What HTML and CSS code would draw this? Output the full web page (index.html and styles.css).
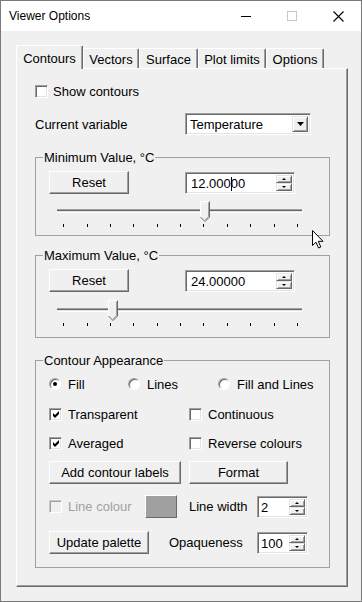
FILE: index.html
```html
<!DOCTYPE html>
<html lang="en">
<head>
    <meta charset="UTF-8">
    <meta name="viewport" content="width=device-width, initial-scale=1.0">
    <title>Viewer Options</title>
    <link rel="stylesheet" href="styles.css">
</head>
<body>
    <div class="window">
        <div class="titlebar">
            <span class="title">Viewer Options</span>
            <div class="caption">
                <span class="cap">
                    <svg width="10" height="10" viewBox="0 0 10 10"><rect x="0" y="5" width="10" height="1" fill="#000"/></svg>
                </span>
                <span class="cap">
                    <svg width="10" height="10" viewBox="0 0 10 10"><rect x="0.5" y="0.5" width="9" height="9" fill="none" stroke="#c8c8c8"/></svg>
                </span>
                <span class="cap">
                    <svg width="11" height="11" viewBox="0 0 11 11"><path d="M0.5 0.5 L10.5 10.5 M10.5 0.5 L0.5 10.5" stroke="#000" stroke-width="1.1"/></svg>
                </span>
            </div>
        </div>

        <div class="client">
            <div class="tabs">
                <div class="tab active w-contours">Contours</div>
                <div class="tab w-vectors">Vectors</div>
                <div class="tab w-surface">Surface</div>
                <div class="tab w-limits">Plot limits</div>
                <div class="tab w-options">Options</div>
            </div>

            <div class="panel">
                <div class="show-row">
                    <span class="check"></span>
                    <span>Show contours</span>
                </div>

                <div class="var-row">
                    <span class="var-label">Current variable</span>
                    <div class="combo">
                        <span class="combo-text">Temperature</span>
                        <span class="combo-btn">
                            <svg width="7" height="4" viewBox="0 0 7 4"><polygon points="0,0 7,0 3.5,4" fill="#000"/></svg>
                        </span>
                    </div>
                </div>

                <!-- minimum value -->
                <fieldset class="group g-min">
                    <legend>Minimum Value, °C</legend>
                    <div class="value-row">
                        <button class="btn reset">Reset</button>
                        <div class="edit spin-edit">
                            <span class="edit-text">12.000<span class="caret"></span>00</span>
                            <span class="spin">
                                <span class="spin-btn"><i class="up"></i></span>
                                <span class="spin-btn"><i class="down"></i></span>
                            </span>
                        </div>
                    </div>
                    <svg class="slider" width="293" height="30" viewBox="0 0 293 30">
                        <rect x="21" y="10" width="245" height="1" fill="#a0a0a0"/>
                        <rect x="21" y="11" width="245" height="1" fill="#696969"/>
                        <rect x="21" y="12" width="245" height="1" fill="#e3e3e3"/>
                        <rect x="21" y="13" width="245" height="1" fill="#fff"/>
                        <polygon points="164.5,2.5 173.5,2.5 173.5,18 169,22.5 164.5,18" fill="#f0f0f0"/>
                        <polyline points="164.5,18 164.5,2.5 173,2.5" fill="none" stroke="#fff"/>
                        <polyline points="173.5,2.5 173.5,18 169,22.5 164.5,18" fill="none" stroke="#696969"/>
                        <polyline points="172.5,3.5 172.5,17.6 169,21" fill="none" stroke="#a0a0a0"/>
                        <g fill="#000">
                            <rect x="27" y="25" width="1" height="3"/>
                            <rect x="51" y="25" width="1" height="3"/>
                            <rect x="74" y="25" width="1" height="3"/>
                            <rect x="97" y="25" width="1" height="3"/>
                            <rect x="121" y="25" width="1" height="3"/>
                            <rect x="144" y="25" width="1" height="3"/>
                            <rect x="167" y="25" width="1" height="3"/>
                            <rect x="191" y="25" width="1" height="3"/>
                            <rect x="214" y="25" width="1" height="3"/>
                            <rect x="238" y="25" width="1" height="3"/>
                            <rect x="261" y="25" width="1" height="3"/>
                        </g>
                    </svg>
                </fieldset>

                <!-- maximum value -->
                <fieldset class="group g-max">
                    <legend>Maximum Value, °C</legend>
                    <div class="value-row">
                        <button class="btn reset">Reset</button>
                        <div class="edit spin-edit">
                            <span class="edit-text">24.00000</span>
                            <span class="spin">
                                <span class="spin-btn"><i class="up"></i></span>
                                <span class="spin-btn"><i class="down"></i></span>
                            </span>
                        </div>
                    </div>
                    <svg class="slider" width="293" height="30" viewBox="0 0 293 30">
                        <rect x="21" y="10" width="245" height="1" fill="#a0a0a0"/>
                        <rect x="21" y="11" width="245" height="1" fill="#696969"/>
                        <rect x="21" y="12" width="245" height="1" fill="#e3e3e3"/>
                        <rect x="21" y="13" width="245" height="1" fill="#fff"/>
                        <polygon points="72.5,2.5 81.5,2.5 81.5,18 77,22.5 72.5,18" fill="#f0f0f0"/>
                        <polyline points="72.5,18 72.5,2.5 81,2.5" fill="none" stroke="#fff"/>
                        <polyline points="81.5,2.5 81.5,18 77,22.5 72.5,18" fill="none" stroke="#696969"/>
                        <polyline points="80.5,3.5 80.5,17.6 77,21" fill="none" stroke="#a0a0a0"/>
                        <g fill="#000">
                            <rect x="27" y="25" width="1" height="3"/>
                            <rect x="51" y="25" width="1" height="3"/>
                            <rect x="74" y="25" width="1" height="3"/>
                            <rect x="97" y="25" width="1" height="3"/>
                            <rect x="121" y="25" width="1" height="3"/>
                            <rect x="144" y="25" width="1" height="3"/>
                            <rect x="167" y="25" width="1" height="3"/>
                            <rect x="191" y="25" width="1" height="3"/>
                            <rect x="214" y="25" width="1" height="3"/>
                            <rect x="238" y="25" width="1" height="3"/>
                            <rect x="261" y="25" width="1" height="3"/>
                        </g>
                    </svg>
                </fieldset>

                <!-- contour appearance -->
                <fieldset class="group g-look">
                    <legend>Contour Appearance</legend>
                    <div class="radio-row">
                        <span class="opt opt-fill"><span class="radio on"></span>Fill</span>
                        <span class="opt opt-lines"><span class="radio"></span>Lines</span>
                        <span class="opt"><span class="radio"></span>Fill and Lines</span>
                    </div>
                    <div class="check-row first">
                        <span class="opt opt-col">
                            <span class="check"><svg class="tick" width="7" height="7" viewBox="0 0 7 7"><polygon points="0,2 2,4 6,0 6,3 2,7 0,5" fill="#000"/></svg></span>Transparent
                        </span>
                        <span class="opt"><span class="check"></span>Continuous</span>
                    </div>
                    <div class="check-row">
                        <span class="opt opt-col">
                            <span class="check"><svg class="tick" width="7" height="7" viewBox="0 0 7 7"><polygon points="0,2 2,4 6,0 6,3 2,7 0,5" fill="#000"/></svg></span>Averaged
                        </span>
                        <span class="opt"><span class="check"></span>Reverse colours</span>
                    </div>
                    <div class="btn-row">
                        <button class="btn labels-btn">Add contour labels</button>
                        <button class="btn format-btn">Format</button>
                    </div>
                    <div class="line-row">
                        <span class="opt disabled line-col"><span class="check off"></span>Line colour</span>
                        <span class="btn swatch"></span>
                        <span class="line-label">Line width</span>
                        <div class="edit small-edit">
                            <span class="edit-text">2</span>
                            <span class="spin">
                                <span class="spin-btn"><i class="up"></i></span>
                                <span class="spin-btn"><i class="down"></i></span>
                            </span>
                        </div>
                    </div>
                    <div class="palette-row">
                        <button class="btn palette-btn">Update palette</button>
                        <span class="opq-label">Opaqueness</span>
                        <div class="edit small-edit">
                            <span class="edit-text">100</span>
                            <span class="spin">
                                <span class="spin-btn"><i class="up"></i></span>
                                <span class="spin-btn"><i class="down"></i></span>
                            </span>
                        </div>
                    </div>
                </fieldset>
            </div>
        </div>

        <svg class="cursor" width="13" height="19" viewBox="0 0 13 19">
            <path d="M0.5 0.5 L0.5 15.5 L4 12.2 L6.6 18 L8.8 17 L6.3 11.3 L11 11.3 Z" fill="#fff" stroke="#000" stroke-linejoin="miter"/>
        </svg>
    </div>
</body>
</html>
```

FILE: styles.css
```css
html, body {
    margin: 0;
    padding: 0;
}
body {
    font-family: "Liberation Sans", Arial, sans-serif;
    font-size: 13px;
    color: #000;
    background-color: #f0f0f0;
}
.window {
    position: relative;
    width: 362px;
    height: 602px;
    box-sizing: border-box;
    border: 1px solid #7a7a7a;
    background-color: #f0f0f0;
    display: flex;
    flex-direction: column;
    overflow: hidden;
}
.titlebar {
    height: 30px;
    flex: none;
    background-color: #fff;
    display: flex;
    align-items: center;
}
.title {
    flex: 1;
    font-size: 12px;
    padding-left: 8px;
    padding-bottom: 1px;
}
.caption {
    display: flex;
    height: 30px;
}
.cap {
    width: 46px;
    display: flex;
    align-items: center;
    justify-content: center;
}
.client {
    padding: 14px 0 0 14px;
}

/* Tabs */
.tabs {
    display: flex;
    align-items: flex-end;
    height: 24px;
    padding-left: 1px;
    margin-bottom: -1px;
    position: relative;
    z-index: 1;
}
.tab {
    box-sizing: border-box;
    height: 20px;
    margin-bottom: 1px;
    padding-top: 3px;
    line-height: 15px;
    text-align: center;
    background-color: #f0f0f0;
    border-top: 1px solid #fff;
    border-left: 1px solid #fff;
    border-right: 1px solid #696969;
    box-shadow: inset -1px 0 #a0a0a0;
    border-radius: 2px 2px 0 0;
}
.tab.active {
    height: 24px;
    margin-bottom: 0;
    padding-top: 5px;
}
.w-contours { width: 67px; }
.w-vectors { width: 56px; }
.w-surface { width: 59px; }
.w-limits { width: 68px; }
.w-options { width: 58px; }

.panel {
    box-sizing: border-box;
    width: 332px;
    height: 519px;
    margin-left: 1px;
    border: 1px solid;
    border-color: #fff #696969 #696969 #fff;
    box-shadow: inset -1px -1px #a0a0a0;
    padding-left: 18px;
    display: flex;
    flex-direction: column;
    align-items: flex-start;
}

/* Checkboxes and radios */
.check {
    display: inline-flex;
    align-items: center;
    justify-content: center;
    box-sizing: border-box;
    width: 13px;
    height: 13px;
    border: 1px solid;
    border-color: #a0a0a0 #fff #fff #a0a0a0;
    box-shadow: inset 1px 1px #696969, inset -1px -1px #e3e3e3;
    background-color: #fff;
    flex: none;
}
.tick {
    display: block;
    margin: 1px 0 0 1px;
}
.check.off {
    background-color: #f0f0f0;
    border-color: #c8c8c8 #fff #fff #c8c8c8;
    box-shadow: inset 1px 1px #a0a0a0;
}
.radio {
    display: inline-block;
    box-sizing: border-box;
    width: 12px;
    height: 12px;
    border-radius: 50%;
    border: 1px solid;
    border-color: #a0a0a0 #fff #fff #a0a0a0;
    box-shadow: inset 1px 1px #696969;
    background-color: #fff;
    position: relative;
    flex: none;
}
.radio.on::after {
    content: "";
    position: absolute;
    left: 3px;
    top: 3px;
    width: 4px;
    height: 4px;
    border-radius: 50%;
    background-color: #000;
}

.show-row {
    margin-top: 16px;
    height: 13px;
    display: flex;
    align-items: center;
    gap: 5px;
}
.var-row {
    margin-top: 15px;
    height: 22px;
    display: flex;
    align-items: center;
}
.var-label {
    width: 150px;
}

/* Combo and edits */
.combo, .edit {
    box-sizing: border-box;
    border: 1px solid;
    border-color: #a0a0a0 #fff #fff #a0a0a0;
    box-shadow: inset 1px 1px #696969, inset -1px -1px #e3e3e3;
    background-color: #fff;
    display: flex;
    align-items: stretch;
    padding: 2px;
}
.combo {
    width: 126px;
    height: 22px;
}
.combo-text {
    flex: 1;
    padding-left: 2px;
    line-height: 18px;
}
.combo-btn {
    width: 16px;
    display: flex;
    align-items: center;
    justify-content: center;
    box-sizing: border-box;
    background-color: #f0f0f0;
    border: 1px solid;
    border-color: #e3e3e3 #696969 #696969 #e3e3e3;
    box-shadow: inset 1px 1px #fff, inset -1px -1px #a0a0a0;
}
.edit-text {
    flex: 1;
    line-height: 18px;
    padding-left: 3px;
    white-space: nowrap;
}
.caret {
    display: inline-block;
    width: 0;
    height: 14px;
    border-left: 1px solid #000;
    margin-right: -1px;
    vertical-align: -3px;
}
.spin {
    width: 16px;
    display: flex;
    flex-direction: column;
}
.spin-btn {
    flex: 1;
    box-sizing: border-box;
    background-color: #f0f0f0;
    border: 1px solid;
    border-color: #e3e3e3 #696969 #696969 #e3e3e3;
    box-shadow: inset 1px 1px #fff, inset -1px -1px #a0a0a0;
    display: flex;
    align-items: center;
    justify-content: center;
}
.spin-btn i {
    display: block;
    width: 0;
    height: 0;
    border-left: 2px solid transparent;
    border-right: 2px solid transparent;
}
.spin-btn .up {
    border-bottom: 2px solid #000;
}
.spin-btn .down {
    border-top: 2px solid #000;
}
.spin-edit {
    width: 110px;
    height: 22px;
    margin-left: 56px;
    margin-top: 1px;
}
.small-edit {
    width: 51px;
    height: 22px;
}
.small-edit .edit-text {
    padding-left: 1px;
}

/* Buttons */
.btn {
    box-sizing: border-box;
    height: 23px;
    padding: 0;
    font-family: inherit;
    font-size: 13px;
    color: #000;
    background-color: #f0f0f0;
    border: 1px solid;
    border-color: #fff #696969 #696969 #fff;
    box-shadow: inset -1px -1px #a0a0a0;
    display: inline-block;
}
.reset {
    width: 80px;
    margin-left: 13px;
}

/* Group boxes */
.group {
    box-sizing: border-box;
    width: 295px;
    margin: 0;
    padding: 0;
    border: 1px solid #a0a0a0;
    min-width: 0;
}
.group legend {
    margin-left: 7px;
    padding: 0 1px;
    line-height: 15px;
}
.g-min {
    margin-top: 15px;
    padding-bottom: 6px;
}
.g-max {
    margin-top: 12px;
    padding-bottom: 9px;
}
.g-look {
    margin-top: 15px;
    padding-bottom: 13px;
}
.value-row {
    margin-top: 6px;
    display: flex;
    align-items: flex-start;
}
.slider {
    display: block;
    margin-top: 5px;
}
.g-max .slider {
    margin-top: 6px;
}

.opt {
    display: flex;
    align-items: center;
    gap: 6px;
}
.radio-row, .check-row {
    display: flex;
    height: 14px;
    align-items: center;
    padding-left: 13px;
}
.radio-row {
    margin-top: 9px;
}
.radio-row .opt {
    gap: 7px;
}
.opt-fill { width: 79px; }
.opt-lines { width: 90px; }
.check-row {
    margin-top: 15px;
}
.check-row.first {
    margin-top: 16px;
}
.opt-col { width: 140px; }
.btn-row {
    margin-top: 11px;
    padding-left: 13px;
    display: flex;
    gap: 8px;
}
.labels-btn { width: 132px; }
.format-btn { width: 99px; }
.line-row, .palette-row {
    display: flex;
    align-items: center;
    padding-left: 13px;
    height: 23px;
}
.line-row {
    margin-top: 11px;
}
.palette-row {
    margin-top: 13px;
}
.disabled {
    color: #a0a0a0;
}
.line-col { width: 96px; }
.swatch {
    width: 32px;
    background-color: #a0a0a0;
    margin-right: 12px;
}
.line-label { width: 68px; }
.palette-btn {
    width: 100px;
    margin-right: 20px;
}
.opq-label { width: 88px; }

.cursor {
    position: absolute;
    left: 311px;
    top: 229px;
}
```
